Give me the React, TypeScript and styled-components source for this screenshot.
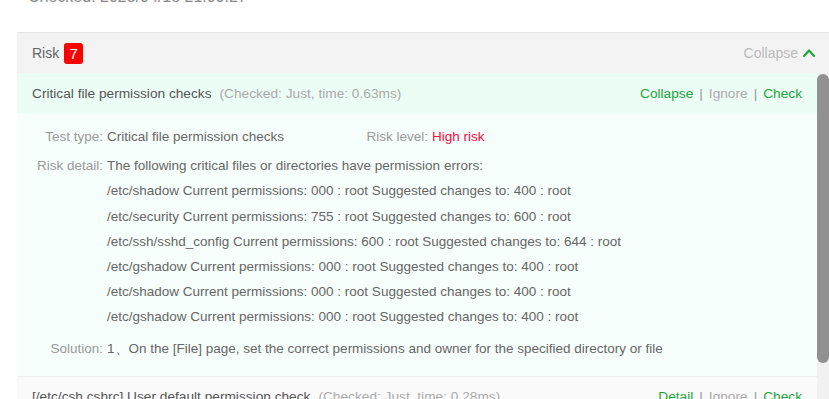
import styled, { createGlobalStyle } from 'styled-components';

const GlobalStyle = createGlobalStyle`
  html, body {
    margin: 0;
    padding: 0;
    background: #ffffff;
    overflow: hidden;
    font-family: "Liberation Sans", Arial, sans-serif;
  }
`;

const Page = styled.div({
  width: '829px',
  height: '399px',
  overflow: 'hidden',
  display: 'flex',
  flexDirection: 'column',
});

const CheckedAt = styled.div({
  marginTop: '-13px',
  paddingLeft: '28px',
  height: '20px',
  lineHeight: '20px',
  fontSize: '16px',
  color: '#888',
  whiteSpace: 'nowrap',
});

const Panel = styled.section({
  marginTop: '25px',
  marginLeft: '17px',
  flex: 1,
  minHeight: 0,
  display: 'flex',
  flexDirection: 'column',
  borderTop: '1px solid #e5e5e5',
});

const PanelHeader = styled.div({
  height: '40px',
  flexShrink: 0,
  display: 'flex',
  alignItems: 'center',
  justifyContent: 'space-between',
  padding: '0 13px 0 15px',
  background: '#f3f3f3',
});

const PanelTitle = styled.div({
  display: 'flex',
  alignItems: 'center',
  fontSize: '14px',
  color: '#666',
});

const Badge = styled.span({
  marginLeft: '5px',
  width: '19px',
  height: '21px',
  borderRadius: '3px',
  background: '#ff0000',
  color: '#fff',
  fontSize: '15px',
  display: 'inline-flex',
  alignItems: 'center',
  justifyContent: 'center',
});

const Toggle = styled.div({
  display: 'flex',
  alignItems: 'center',
  gap: '4px',
  fontSize: '14px',
  color: '#bbb',
});

const ScrollArea = styled.div({
  flex: 1,
  minHeight: 0,
  display: 'flex',
});

const Viewport = styled.div({
  flex: 1,
  minWidth: 0,
  overflow: 'hidden',
});

const ScrollTrack = styled.div({
  width: '12px',
  flexShrink: 0,
  background: '#f1f1f1',
  display: 'flex',
  flexDirection: 'column',
  paddingTop: '1px',
});

const ScrollThumb = styled.div({
  height: '289px',
  background: '#919191',
  borderRadius: '6px',
});

const List = styled.div({});

const Item = styled.div({
  borderBottom: '1px solid #eeeeee',
});

const ItemHeader = styled.div<{ $open?: boolean }>((props) => ({
  height: '40px',
  display: 'flex',
  alignItems: 'center',
  justifyContent: 'space-between',
  padding: '0 15px',
  background: props.$open ? '#ecfdf6' : '#fafafa',
  boxShadow: props.$open ? '0 1px 0 #eaf6f1' : 'none',
  fontSize: '13.7px',
}));

const ItemTitle = styled.div({
  color: '#555',
  whiteSpace: 'nowrap',
});

const Meta = styled.span({
  marginLeft: '8px',
  color: '#aaa',
});

const Actions = styled.div({
  display: 'flex',
  alignItems: 'center',
  gap: '6px',
  whiteSpace: 'nowrap',
});

const Action = styled.span<{ $muted?: boolean }>((props) => ({
  color: props.$muted ? '#aaa' : '#20a53a',
}));

const Sep = styled.span({
  color: '#999',
});

const ItemBody = styled.div({
  background: '#f7fffc',
  padding: '11px 15px 15px 0',
  display: 'flex',
  flexDirection: 'column',
  gap: '4px',
  fontSize: '13.5px',
});

const FieldRow = styled.div({
  display: 'flex',
});

const Field = styled.div<{ $width?: number; $top?: number }>((props) => ({
  display: 'flex',
  width: props.$width ? `${props.$width}px` : 'auto',
  marginTop: props.$top ? `${props.$top}px` : 0,
}));

const Label = styled.span({
  width: '86px',
  flexShrink: 0,
  textAlign: 'right',
  marginRight: '4px',
  color: '#999',
  lineHeight: '25.2px',
});

const Value = styled.div<{ $danger?: boolean }>((props) => ({
  color: props.$danger ? '#ff0a3c' : '#666',
  lineHeight: '25.2px',
  whiteSpace: 'nowrap',
}));

const Line = styled.div({});

const details = [
  '/etc/shadow Current permissions: 000 : root Suggested changes to: 400 : root',
  '/etc/security Current permissions: 755 : root Suggested changes to: 600 : root',
  '/etc/ssh/sshd_config Current permissions: 600 : root Suggested changes to: 644 : root',
  '/etc/gshadow Current permissions: 000 : root Suggested changes to: 400 : root',
  '/etc/shadow Current permissions: 000 : root Suggested changes to: 400 : root',
  '/etc/gshadow Current permissions: 000 : root Suggested changes to: 400 : root',
];

function ChevronUp() {
  return (
    <svg width="14" height="14" viewBox="0 0 14 14" fill="none">
      <path d="M2 10 L7 4.5 L12 10" stroke="#20a53a" strokeWidth="2.2" strokeLinecap="round" strokeLinejoin="round" />
    </svg>
  );
}

export default function App() {
  return (
    <Page>
      <GlobalStyle />
      <CheckedAt>Checked: 2025/04/18 21:09:27</CheckedAt>
      <Panel>
        <PanelHeader>
          <PanelTitle>
            Risk <Badge>7</Badge>
          </PanelTitle>
          <Toggle>
            Collapse <ChevronUp />
          </Toggle>
        </PanelHeader>
        <ScrollArea>
          <Viewport>
            <List>
              <Item>
                <ItemHeader $open>
                  <ItemTitle>
                    Critical file permission checks
                    <Meta>(Checked: Just, time: 0.63ms)</Meta>
                  </ItemTitle>
                  <Actions>
                    <Action>Collapse</Action>
                    <Sep>|</Sep>
                    <Action $muted>Ignore</Action>
                    <Sep>|</Sep>
                    <Action>Check</Action>
                  </Actions>
                </ItemHeader>
                <ItemBody>
                  <FieldRow>
                    <Field $width={325}>
                      <Label>Test type:</Label>
                      <Value>Critical file permission checks</Value>
                    </Field>
                    <Field>
                      <Label>Risk level:</Label>
                      <Value $danger>High risk</Value>
                    </Field>
                  </FieldRow>
                  <Field>
                    <Label>Risk detail:</Label>
                    <Value>
                      <Line>The following critical files or directories have permission errors:</Line>
                      {details.map((d, i) => (
                        <Line key={i}>{d}</Line>
                      ))}
                    </Value>
                  </Field>
                  <Field $top={2}>
                    <Label>Solution:</Label>
                    <Value>1、On the [File] page, set the correct permissions and owner for the specified directory or file</Value>
                  </Field>
                </ItemBody>
              </Item>
              <Item>
                <ItemHeader>
                  <ItemTitle>
                    [/etc/csh.cshrc] User default permission check
                    <Meta>(Checked: Just, time: 0.28ms)</Meta>
                  </ItemTitle>
                  <Actions>
                    <Action>Detail</Action>
                    <Sep>|</Sep>
                    <Action $muted>Ignore</Action>
                    <Sep>|</Sep>
                    <Action>Check</Action>
                  </Actions>
                </ItemHeader>
              </Item>
            </List>
          </Viewport>
          <ScrollTrack>
            <ScrollThumb />
          </ScrollTrack>
        </ScrollArea>
      </Panel>
    </Page>
  );
}
